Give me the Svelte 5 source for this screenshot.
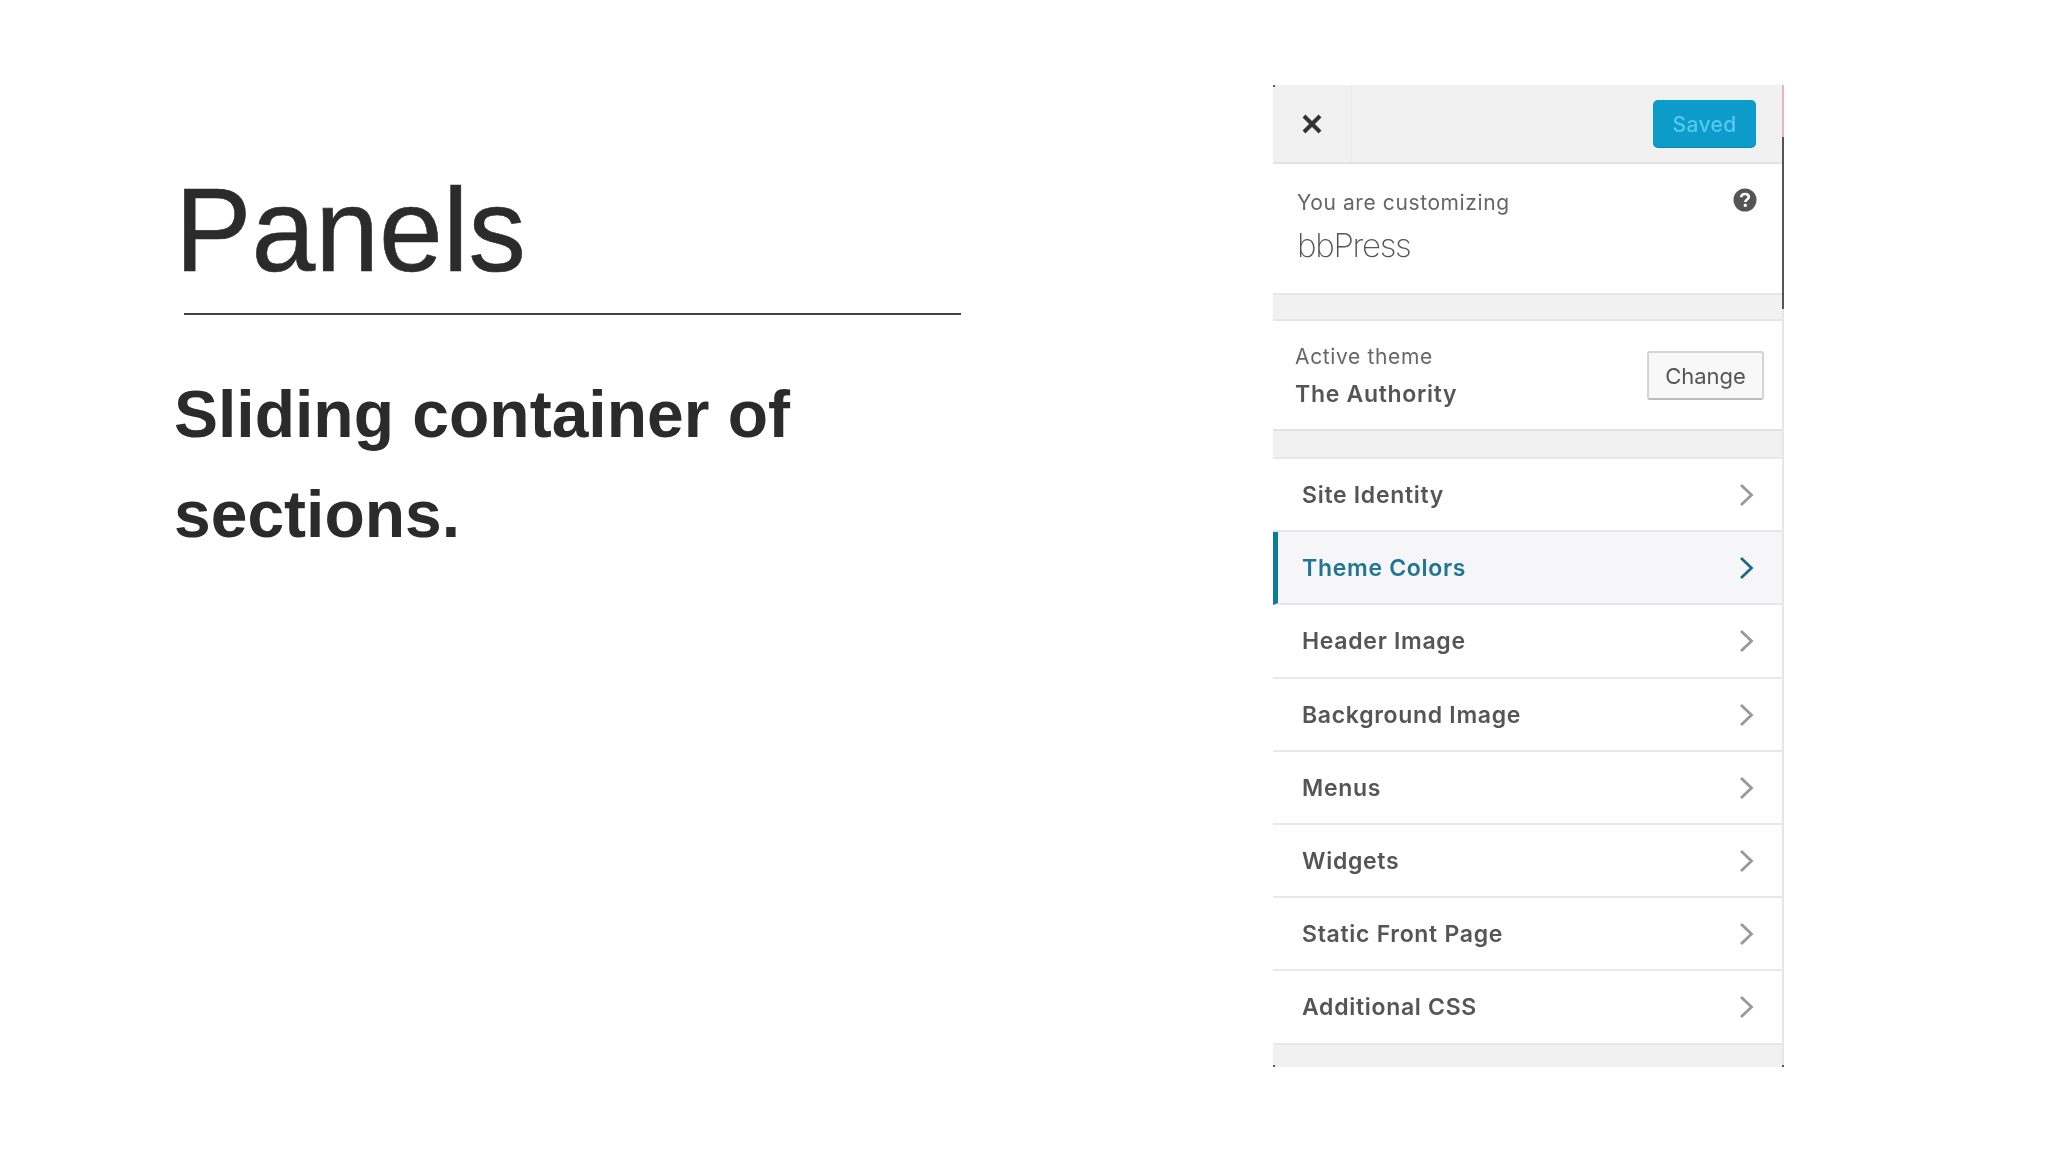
<script>
  const rows = [
    'Site Identity',
    'Theme Colors',
    'Header Image',
    'Background Image',
    'Menus',
    'Widgets',
    'Static Front Page',
    'Additional CSS'
  ];
  const active = 'Theme Colors';
</script>

<div class="page">
  <section class="slide-text">
    <h1>Panels</h1>
    <hr />
    <p>Sliding container of sections.</p>
  </section>

  <aside class="panel">
    <span class="edge-pink"></span>
    <span class="edge-dark"></span>
    <span class="dot tl"></span>
    <span class="dot bl"></span>
    <span class="dot br"></span>
    <header class="topbar">
      <div class="close">
        <svg width="24" height="24" viewBox="0 0 24 24">
          <path d="M4 4L20 20M20 4L4 20" stroke="#333" stroke-width="4" fill="none" />
        </svg>
      </div>
      <button class="saved">Saved</button>
    </header>

    <div class="info">
      <div>
        <div class="customizing">You are customizing</div>
        <div class="site">bbPress</div>
      </div>
      <svg class="help" width="24" height="24" viewBox="0 0 24 24">
        <circle cx="12" cy="12" r="11.500" fill="#555" />
        <path d="M8.200 9.300C8.300 7 10 6 12 6C14.200 6 15.800 7.200 15.800 9C15.800 11.500 12.300 11.500 12.300 14" stroke="#fff" stroke-width="2.600" fill="none" />
        <rect x="10.800" y="15.800" width="3" height="3" fill="#fff" />
      </svg>
    </div>

    <div class="theme">
      <div>
        <div class="theme-label">Active theme</div>
        <div class="theme-name">The Authority</div>
      </div>
      <button class="change">Change</button>
    </div>

    <ul class="rows">
      {#each rows as row}
        <li class="row" class:active={row === active}>
          <span>{row}</span>
          <svg width="18" height="26" viewBox="0 0 18 26">
            <path d="M3 3L13.500 13L3 23" fill="none" stroke-width="2.800" />
          </svg>
        </li>
      {/each}
    </ul>
  </aside>
</div>

<style>
  :global(body) {
    background: #fff;
  }

  .page {
    width: 2048px;
    height: 1152px;
    display: flex;
    box-sizing: border-box;
    padding: 85px 0 0 175px;
    font-family: "Liberation Sans", Arial, sans-serif;
    color: #2b2b2b;
    overflow: hidden;
  }

  .slide-text {
    width: 1098px;
    flex: none;
  }

  /* the slide title is a bit narrower than plain Arial */
  h1 {
    margin: 77px 0 0;
    font-size: 119px;
    line-height: 135px;
    font-weight: 400;
    -webkit-text-stroke: 0.6px #2b2b2b;
    transform: scaleX(0.964);
    transform-origin: left center;
  }

  hr {
    width: 777px;
    height: 2px;
    margin: 16px 0 0 9px;
    border: 0;
    background: #444;
  }

  p {
    width: 700px;
    margin: 49px 0 0 -1px;
    font-size: 66px;
    line-height: 100px;
    font-weight: 700;
  }

  .panel {
    position: relative;
    width: 509px;
    height: 982px;
    flex: none;
    background: #f1f1f1;
    border-right: 2px solid #e6e6e6;
    font-family: Inter, "Noto Sans", sans-serif;
    filter: blur(0.6px);
  }

  .edge-pink,
  .edge-dark {
    position: absolute;
    right: -2px;
    width: 2px;
  }

  .edge-pink {
    top: 0;
    height: 52px;
    background: #eeb4bd;
  }

  .edge-dark {
    top: 52px;
    height: 172px;
    background: #555;
  }

  .dot {
    position: absolute;
    width: 2px;
    height: 2px;
    background: #555;
  }

  .dot.tl {
    top: 0;
    left: 0;
  }

  .dot.bl {
    bottom: 0;
    left: 0;
  }

  .dot.br {
    bottom: 0;
    right: -2px;
  }

  .topbar {
    height: 79px;
    display: flex;
    align-items: center;
    justify-content: space-between;
    box-sizing: border-box;
    padding-right: 26px;
    border-bottom: 2px solid #e2e2e2;
  }

  .close {
    width: 79px;
    height: 77px;
    display: flex;
    align-items: center;
    justify-content: center;
    box-sizing: border-box;
    border-right: 2px solid #ececec;
  }

  .saved {
    width: 103px;
    height: 47px;
    padding: 2px 0 0;
    border: 0;
    border-radius: 5px;
    background: #0d9bc9;
    box-shadow: 0 1px 0 #0b86ad;
    color: #55c8f0;
    font: 500 21px Inter, sans-serif;
    letter-spacing: 0.4px;
  }

  .info {
    height: 131px;
    display: flex;
    justify-content: space-between;
    box-sizing: border-box;
    padding: 24px 25px 0 24px;
    background: #fff;
    border-bottom: 2px solid #e6e6e6;
  }

  .customizing {
    font-size: 21px;
    line-height: 30px;
    letter-spacing: 0.6px;
    color: #666;
  }

  .site {
    margin-top: 9px;
    font-size: 33px;
    line-height: 36px;
    font-weight: 200;
    letter-spacing: -1.300px;
    color: #555;
  }

  .help {
    margin-top: 0;
  }

  .theme {
    height: 112px;
    margin-top: 24px;
    display: flex;
    justify-content: space-between;
    align-items: center;
    box-sizing: border-box;
    padding: 0 18px 0 22px;
    background: #fff;
    border-top: 2px solid #e6e6e6;
    border-bottom: 2px solid #e2e2e2;
  }

  .theme-label {
    font-size: 21px;
    line-height: 30px;
    letter-spacing: 0.65px;
    color: #666;
  }

  .theme-name {
    margin-top: 7px;
    font-size: 23px;
    line-height: 30px;
    font-weight: 600;
    letter-spacing: 0.7px;
    color: #555;
  }

  .change {
    width: 117px;
    height: 49px;
    margin-top: 1px;
    padding: 0;
    border: 2px solid #d4d4d4;
    border-bottom-color: #bbb;
    border-radius: 3px;
    background: #f8f8f8;
    color: #555;
    font: 400 22px Inter, sans-serif;
  }

  .rows {
    margin: 26px 0 0;
    padding: 0;
    list-style: none;
    background: #fff;
    border-top: 2px solid #e8e8e8;
  }

  .row {
    height: 73.200px;
    display: flex;
    align-items: center;
    justify-content: space-between;
    box-sizing: border-box;
    padding: 1px 26px 0 29px;
    border-bottom: 2px solid #e8e8e8;
    font-size: 23px;
    font-weight: 600;
    letter-spacing: 0.7px;
    color: #555;
  }

  .row svg {
    stroke: #999;
  }

  .row.active {
    padding-left: 24px;
    background: #f6f6f8;
    border-left: 5px solid #0d7c99;
    color: #1f7594;
  }

  .row.active svg {
    stroke: #1f6b85;
  }
</style>
